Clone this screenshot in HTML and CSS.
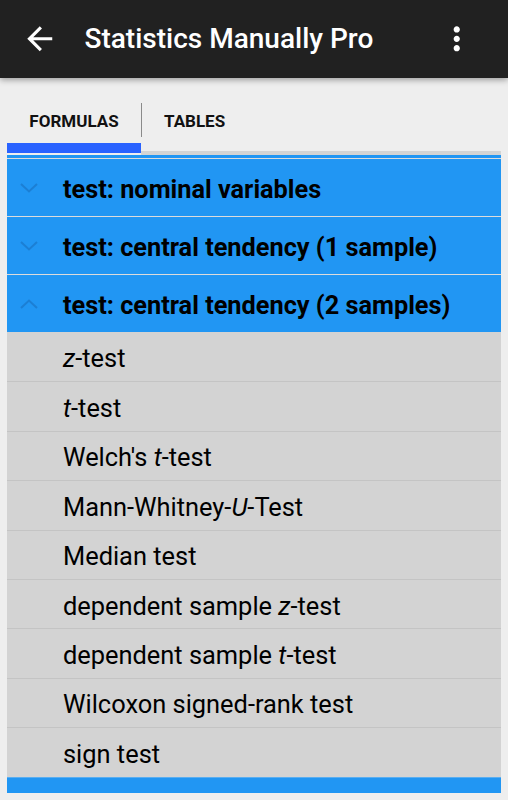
FILE: index.html
```html
<!DOCTYPE html>
<html>
<head>
<meta charset="utf-8">
<link rel="stylesheet" href="styles.css">
</head>
<body>
<header class="appbar">
  <svg class="icon back" viewBox="0 0 24 24"><path fill="#fff" d="M20 11H7.83l5.59-5.59L12 4l-8 8 8 8 1.41-1.41L7.83 13H20v-2z"/></svg>
  <div class="title">Statistics Manually Pro</div>
  <svg class="icon more" viewBox="0 0 24 24"><path fill="#fff" d="M12 8c1.1 0 2-.9 2-2s-.9-2-2-2-2 .9-2 2 .9 2 2 2zm0 2c-1.1 0-2 .9-2 2s.9 2 2 2 2-.9 2-2-.9-2-2-2zm0 6c-1.1 0-2 .9-2 2s.9 2 2 2 2-.9 2-2-.9-2-2-2z"/></svg>
</header>
<nav class="tabs">
  <div class="tab active"><span>FORMULAS</span></div>
  <div class="tab second"><span>TABLES</span></div>
  <div class="tab-rest"></div>
</nav>
<main class="list">
  <div class="strip-top"></div>
  <div class="group">
    <svg class="chev" viewBox="0 0 18 10"><polyline points="1,1 9,8.5 17,1" fill="none" stroke="currentColor" stroke-width="2"/></svg>
    <span>test: nominal variables</span>
  </div>
  <div class="group">
    <svg class="chev" viewBox="0 0 18 10"><polyline points="1,1 9,8.5 17,1" fill="none" stroke="currentColor" stroke-width="2"/></svg>
    <span>test: central tendency (1 sample)</span>
  </div>
  <div class="group">
    <svg class="chev" viewBox="0 0 18 10"><polyline points="1,9 9,1.5 17,9" fill="none" stroke="currentColor" stroke-width="2"/></svg>
    <span>test: central tendency (2 samples)</span>
  </div>
  <div class="item first"><span><i>z</i>-test</span></div>
  <div class="item"><span><i>t</i>-test</span></div>
  <div class="item"><span>Welch's <i>t</i>-test</span></div>
  <div class="item"><span>Mann-Whitney-<i>U</i>-Test</span></div>
  <div class="item"><span>Median test</span></div>
  <div class="item"><span>dependent sample <i>z</i>-test</span></div>
  <div class="item"><span>dependent sample <i>t</i>-test</span></div>
  <div class="item"><span>Wilcoxon signed-rank test</span></div>
  <div class="item"><span>sign test</span></div>
  <div class="strip-bottom"></div>
</main>
</body>
</html>
```
FILE: styles.css
```css
* { box-sizing: border-box; }
html, body {
  margin: 0;
  padding: 0;
  background: #eeeeee;
  font-family: Roboto, "Noto Sans", sans-serif;
  width: 508px;
  height: 800px;
  overflow: hidden;
}
.appbar {
  height: 78px;
  background: #212121;
  display: flex;
  align-items: center;
  box-shadow: 0 2px 6px rgba(0,0,0,0.35);
  position: relative;
  z-index: 2;
}
.icon { width: 37.5px; height: 37.5px; flex: none; }
.back { margin-left: 21px; }
.title {
  margin-left: 26px;
  color: #fff;
  font-size: 28px;
  font-weight: 500;
  flex: 1;
  padding-bottom: 1px;
}
.more { margin-right: 33px; }
.tabs {
  height: 77px;
  display: flex;
  align-items: stretch;
  padding-left: 7px;
  padding-right: 7px;
}
.tab {
  display: flex;
  align-items: flex-start;
  font-weight: 700;
  font-size: 17px;
  line-height: 20px;
  color: #111;
  padding-top: 33px;
}
.tab.active {
  width: 134px;
  justify-content: center;
  border-bottom: 10px solid #2962ff;
  margin-bottom: 2px;
  position: relative;
}
.tab.active::after {
  content: "";
  position: absolute;
  right: -1px;
  top: 25px;
  height: 34px;
  width: 1.5px;
  background: #8a8a8a;
}
.tab.second {
  padding-left: 23px;
  padding-right: 20px;
  border-bottom: 4px solid #d4d4d4;
}
.tab-rest {
  flex: 1;
  border-bottom: 4px solid #d4d4d4;
}
.list {
  margin: 0 7px;
  display: flex;
  flex-direction: column;
}
.strip-top { height: 3px; background: #2196f3; }
.group {
  height: 58px;
  background: #2196f3;
  border-top: 1px solid #dcdcdc;
  display: flex;
  align-items: center;
  font-weight: 700;
  font-size: 25.3px;
  color: #000;
  padding-top: 3px;
}
.chev {
  width: 18px;
  height: 10px;
  margin-left: 13px;
  margin-right: 25px;
  margin-bottom: 3px;
  color: #1c7fd4;
  flex: none;
}
.item {
  height: 49.4px;
  background: #d3d3d3;
  border-top: 1px solid #c4c4c4;
  display: flex;
  align-items: center;
  padding-left: 56px;
  padding-top: 3px;
  font-size: 25.4px;
  color: #000;
}
.item.first { border-top: 0; }
.strip-bottom { height: 16px; background: #2196f3; border-top: 1px solid #5aaef0; }
```
